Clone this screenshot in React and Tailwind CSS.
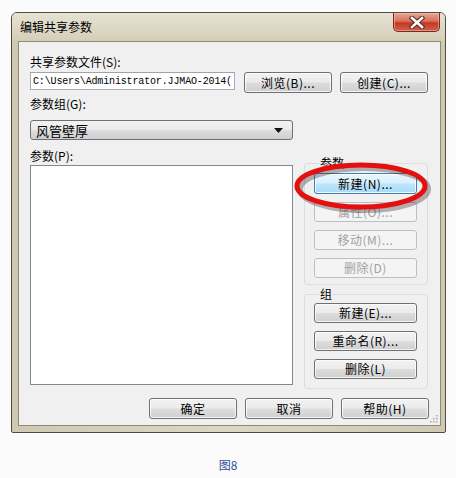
const font = "font-['Noto_Sans_CJK_SC','Noto_Sans_CJK_JP',sans-serif]";

const btnOn =
  "border-[#707070] bg-[linear-gradient(#f2f2f2_0%,#ebebeb_48%,#dddddd_52%,#cfcfcf_100%)] text-black shadow-[inset_0_0_0_1px_rgba(255,255,255,0.75)]";
const btnOff = "border-[#bcc0c2] bg-[#f4f4f4] text-[#a2a2a2]";

function Button({ children, w = "w-[88px]", h = "h-[21px]", disabled, primary }) {
  let look = disabled ? btnOff : btnOn;
  if (primary) {
    look =
      "border-[#3c7fb1] bg-[linear-gradient(#eaf6fd_0%,#d9f0fc_48%,#bee6fd_52%,#a7d9f5_100%)] text-black shadow-[inset_0_0_0_1px_rgba(255,255,255,0.8)]";
  }
  return (
    <div
      className={`${w} ${h} ${look} shrink-0 rounded-[3px] border flex items-center justify-center text-[12px] leading-none tracking-[0.5px]`}
    >
      {children}
    </div>
  );
}

function Group({ title, children, className = "" }) {
  return (
    <fieldset
      className={`w-[124px] rounded-[3px] border border-[#d5dfe5] pl-[9px] pr-[10px] ${className}`}
    >
      <legend className="ml-[6px] px-0 text-[12px] leading-[14px]">{title}</legend>
      {children}
    </fieldset>
  );
}

function CloseButton() {
  return (
    <div className="w-[47px] h-[19px] rounded-b-[5px] border border-t-0 border-[#7a2a1e] bg-[linear-gradient(#e8a494_0%,#d8705c_45%,#c2391f_55%,#d0604a_100%)] flex items-center justify-center shadow-[inset_0_0_0_1px_rgba(255,210,200,0.45)]">
      <svg width="16" height="13" viewBox="0 0 16 13">
        <path d="M3 2 L13 11 M13 2 L3 11" stroke="#5b2a22" strokeWidth="4.6" strokeLinecap="square" />
        <path d="M3 2 L13 11 M13 2 L3 11" stroke="#ffffff" strokeWidth="2.6" strokeLinecap="square" />
      </svg>
    </div>
  );
}

export default function App() {
  return (
    <div className={`relative w-[456px] h-[478px] bg-[#fbfbfb] ${font} overflow-hidden`}>
      <div className="pt-[12px] pl-[11px]">
        {/* window frame */}
        <div className="w-[435px] h-[421px] rounded-t-[6px] rounded-b-[2px] border border-[#4f4b3e] bg-[linear-gradient(90deg,#cfc9b1_0%,#dcd7c4_50%,#cfc9b1_100%)] flex flex-col">
          <div className="h-[28px] shrink-0 flex items-start justify-between rounded-t-[5px] bg-[linear-gradient(180deg,#e6e2d2_0%,#ddd8c5_55%,#d4ceb7_100%)]">
            <div className="pl-[8px] h-[27px] flex items-center text-[12px] text-black">编辑共享参数</div>
            <div className="mr-[5px]">
              <CloseButton />
            </div>
          </div>

          {/* client area */}
          <div className="relative ml-[6px] w-[423px] h-[385px] border border-[#8f8a74] bg-[#f0f0f0] pl-[11px] pr-[11px] pt-[13px] text-[12px] text-black">
            <div className="leading-[14px]">共享参数文件(S):</div>
            <div className="mt-[3px] flex items-start">
              <div className="w-[205px] h-[18px] border border-[#abadb3] border-t-[#a0a3aa] bg-white pl-[2px] whitespace-nowrap flex items-center font-['Liberation_Mono',monospace] text-[10px] tracking-[-0.15px]">
                C:\Users\Administrator.JJMAO-2014(
              </div>
              <div className="ml-[9px] flex gap-[8px]">
                <Button>浏览(B)...</Button>
                <Button>创建(C)...</Button>
              </div>
            </div>

            <div className="mt-[4px] leading-[14px]">参数组(G):</div>
            <div className="mt-[9px] w-[263px] h-[20px] rounded-[3px] border border-[#707070] bg-[linear-gradient(#f2f2f2_0%,#ebebeb_48%,#dddddd_52%,#cfcfcf_100%)] flex items-center justify-between pl-[5px] pr-[9px]">
              <span className="text-[13px] leading-none">风管壁厚</span>
              <svg width="9" height="5" viewBox="0 0 9 5">
                <path d="M0 0 H9 L4.5 5 Z" fill="#111" />
              </svg>
            </div>

            <div className="mt-[9px] flex items-start">
              <div>
                <div className="leading-[14px]">参数(P):</div>
                <div className="mt-[2px] w-[263px] h-[220px] border border-[#828790] bg-white" />
              </div>
              <div className="ml-[11px] mt-[7px] flex flex-col">
                <Group title="参数" className="pb-[6px]">
                  <div className="pt-[3px] flex flex-col gap-[8px]">
                    <Button w="w-[103px]" primary>新建(N)...</Button>
                    <Button w="w-[103px]" h="h-[20px]" disabled>属性(O)...</Button>
                    <Button w="w-[103px]" h="h-[20px]" disabled>移动(M)...</Button>
                    <Button w="w-[103px]" h="h-[20px]" disabled>删除(D)</Button>
                  </div>
                </Group>
                <Group title="组" className="mt-[2px] pb-[9px]">
                  <div className="pt-[2px] flex flex-col gap-[8px]">
                    <Button w="w-[103px]" h="h-[20px]">新建(E)...</Button>
                    <Button w="w-[103px]" h="h-[20px]">重命名(R)...</Button>
                    <Button w="w-[103px]" h="h-[20px]">删除(L)</Button>
                  </div>
                </Group>
              </div>
            </div>

            <div className="mt-[9px] flex justify-end gap-[8px]">
              <Button>确定</Button>
              <Button>取消</Button>
              <Button>帮助(H)</Button>
            </div>

            {/* size grip */}
            <svg className="absolute right-[2px] bottom-[2px]" width="10" height="10" viewBox="0 0 10 10">
              {[
                [8, 2],
                [8, 5],
                [5, 5],
                [8, 8],
                [5, 8],
                [2, 8],
              ].map(([x, y], i) => (
                <rect key={i} x={x} y={y} width="1.5" height="1.5" fill="#a9a9a9" />
              ))}
            </svg>
          </div>
        </div>
      </div>

      {/* red highlight ellipse drawn over the dialog */}
      <svg className="absolute left-[288px] top-[158px]" width="150" height="58" viewBox="0 0 150 58">
        <ellipse cx="76" cy="31" rx="64" ry="21" fill="none" stroke="rgba(60,40,40,0.35)" strokeWidth="6" />
        <ellipse cx="73" cy="28" rx="64" ry="21" fill="none" stroke="#e3100f" strokeWidth="5" />
      </svg>

      <div className="absolute left-0 right-0 top-[457px] text-center text-[12px] leading-[16px] text-[#2e4f9a]">
        图8
      </div>
    </div>
  );
}
